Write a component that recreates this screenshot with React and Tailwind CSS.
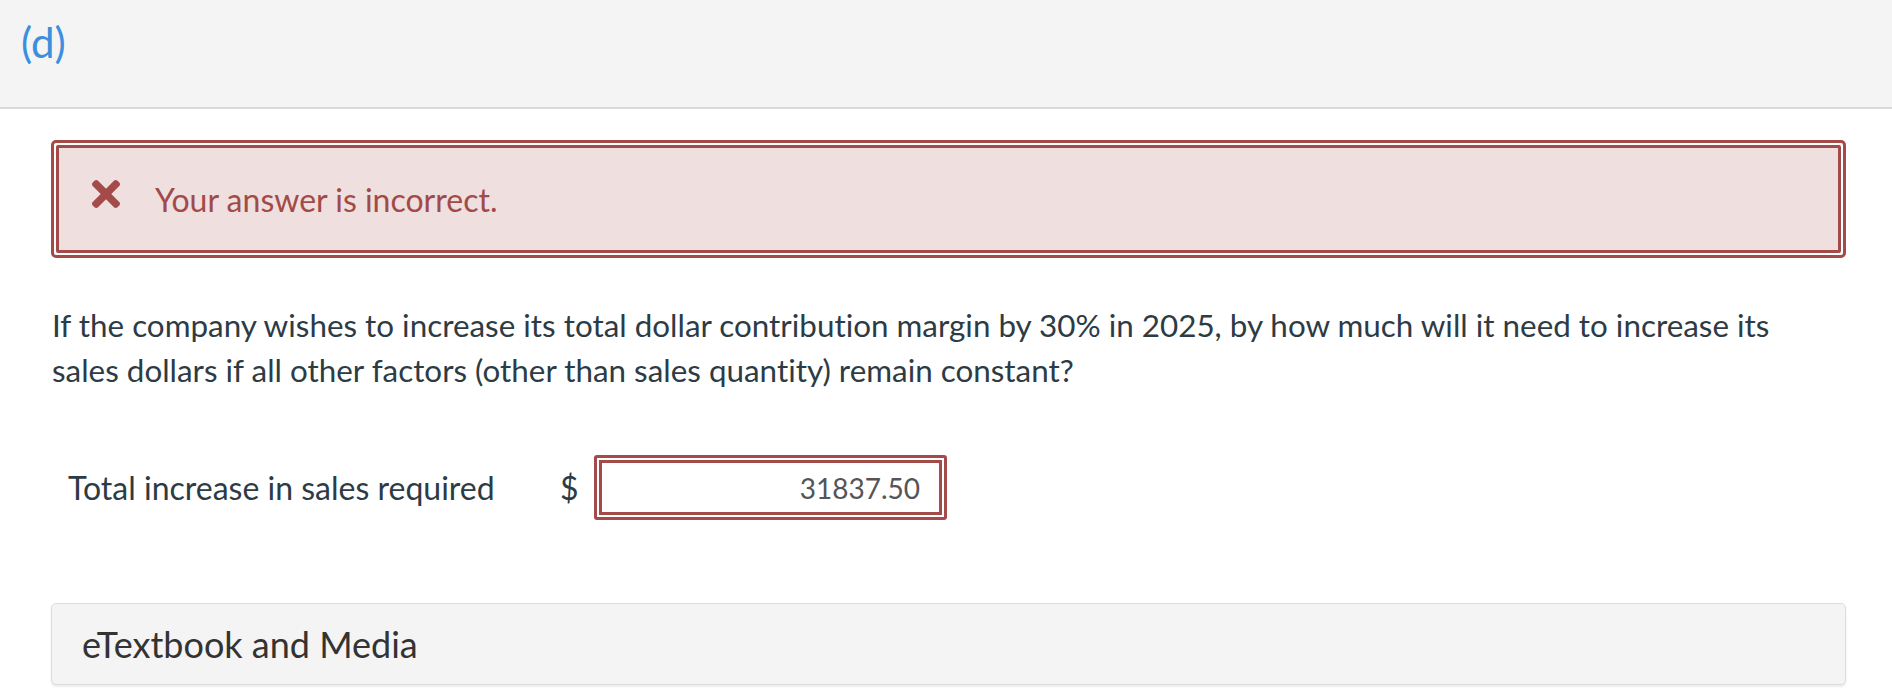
import React from "react";

const RED = "border-[#a44b49]";

function TimesIcon() {
  return (
    <svg width="28" height="28" viewBox="0 80 352 352" aria-hidden="true">
      <path
        fill="#a44b49"
        d="M242.72 256l100.07-100.07c12.28-12.28 12.28-32.19 0-44.48l-22.24-22.24c-12.28-12.28-32.19-12.28-44.48 0L176 189.28 75.930 89.21c-12.28-12.28-32.19-12.28-44.48 0L9.21 111.45c-12.28 12.28-12.28 32.19 0 44.48L109.28 256 9.21 356.07c-12.28 12.28-12.28 32.19 0 44.480l22.24 22.24c12.28 12.28 32.2 12.28 44.48 0L176 322.72l100.07 100.07c12.28 12.28 32.2 12.28 44.48 0l22.24-22.24c12.28-12.28 12.28-32.19 0-44.48L242.72 256z"
      />
    </svg>
  );
}

export default function App() {
  return (
    <div
      className="w-[1892px] h-[694px] bg-white overflow-hidden [font-variant-ligatures:none]"
      style={{ fontFamily: "Lato, 'Open Sans', 'Liberation Sans', sans-serif" }}
    >
      <div className="h-[109px] bg-[#f4f4f4] border-b-2 border-[#d9d9d9] pl-[21px] pt-[22px]">
        <span className="text-[42px] leading-[41px] text-[#3b8fdd]">(d)</span>
      </div>

      <div className="pl-[51px] pr-[46px] pt-[31px]">
        <div className={`border-[3px] ${RED} rounded-[5px] p-[2px] bg-white`}>
          <div className={`h-[108px] border-[3px] ${RED} rounded-[2px] bg-[#efdfdf] flex items-center pl-[33px]`}>
            <div className="mb-[11px] flex">
              <TimesIcon />
            </div>
            <span className="ml-[35px] text-[32px] leading-[45px] text-[#a24a48]">
              Your answer is incorrect.
            </span>
          </div>
        </div>

        <p className="mt-[45px] pl-[1px] pr-[24px] text-[31.4px] leading-[45px] text-[#2d3b45]">
          If the company wishes to increase its total dollar contribution margin by 30% in 2025, by how much will it need to increase its sales dollars if all other factors (other than sales quantity) remain constant?
        </p>

        <div className="mt-[62px] flex items-center">
          <div className="w-[507px] pl-[17px] text-[32px] leading-[45px] text-[#2d3b45]">
            Total increase in sales required
          </div>
          <div className="w-[36px] pl-[2px] text-[32px] leading-[45px] text-[#2d3b45]">$</div>
          <div className={`w-[353px] h-[65px] border-[3px] ${RED} rounded-[3px] p-[2px] bg-white`}>
            <div className={`h-full border-[3px] ${RED} bg-white flex items-center justify-end pr-[19px] text-[28px] text-[#555555]`}>
              31837.50
            </div>
          </div>
        </div>

        <div className="mt-[83px] h-[82px] bg-[#f4f4f4] border border-[#dcdcdc] rounded-[5px] shadow-[0_2px_2px_rgba(0,0,0,0.08)] flex items-center pl-[30px]">
          <span className="text-[36px] text-[#333333]">eTextbook and Media</span>
        </div>
      </div>
    </div>
  );
}
